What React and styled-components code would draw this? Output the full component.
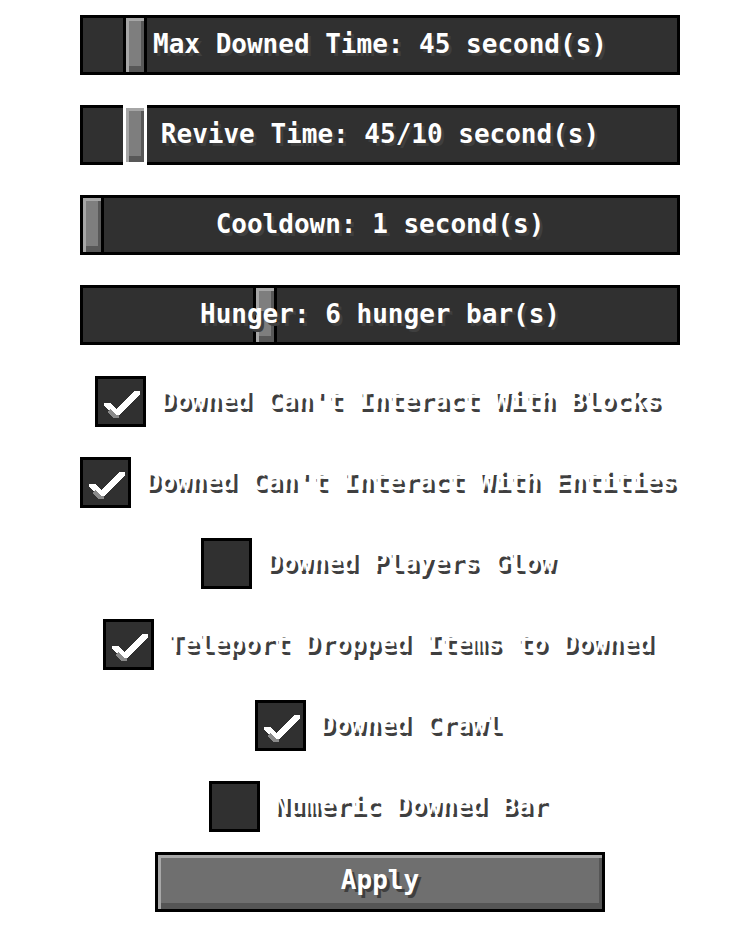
import React from "react";
import styled, { createGlobalStyle } from "styled-components";

const Global = createGlobalStyle`
  html, body { margin: 0; padding: 0; background: #ffffff; }
  body { font-family: "DejaVu Sans Mono", "Liberation Mono", monospace; }
`;

const Screen = styled.div`
  display: flex;
  flex-direction: column;
  align-items: center;
  padding-top: 15px;
  padding-left: 4px;
`;

const SliderList = styled.div`
  display: flex;
  flex-direction: column;
  gap: 30px;
`;

const SliderTrack = styled.div`
  position: relative;
  box-sizing: border-box;
  width: 600px;
  height: 60px;
  border: 3px solid #000;
  background: #303030;
  display: flex;
  align-items: center;
  justify-content: center;
`;

const Handle = styled.div`
  position: absolute;
  top: -3px;
  bottom: -3px;
  width: 24px;
  box-sizing: border-box;
  border: 3px solid ${(p) => (p.$focused ? "#ffffff" : "#000000")};
  background: #7e7e7e;
  box-shadow: inset 3px 3px 0 #a6a6a6, inset -3px -6px 0 #585858;
`;

const SliderText = styled.span`
  position: relative;
  color: #ffffff;
  font-size: 26px;
  font-weight: bold;
  line-height: 1;
  text-shadow: 3px 3px 0 #3f3f3f;
  white-space: nowrap;
  margin-top: -2px;
`;

const CheckList = styled.div`
  display: flex;
  flex-direction: column;
  align-items: center;
  gap: 30px;
  margin-top: 31px;
  margin-left: -4px;
`;

const CheckRow = styled.div`
  display: flex;
  align-items: center;
  gap: 14px;
  height: 51px;
`;

const Box = styled.div`
  box-sizing: border-box;
  width: 51px;
  height: 51px;
  border: 3px solid #000;
  background: #303030;
  display: flex;
  align-items: center;
  justify-content: center;
`;

const Label = styled.span`
  color: #ffffff;
  font-size: 25.2px;
  font-weight: bold;
  line-height: 1;
  text-shadow: 3px 3px 0 #3f3f3f;
  white-space: nowrap;
  margin-top: -2px;
`;

const ApplyButton = styled.button`
  margin-top: 20px;
  box-sizing: border-box;
  width: 450px;
  height: 60px;
  border: 3px solid #000;
  background: #6f6f6f;
  box-shadow: inset 3px 3px 0 #a8a8a8, inset -3px -6px 0 #555555;
  color: #ffffff;
  font-family: "DejaVu Sans Mono", "Liberation Mono", monospace;
  font-size: 26px;
  font-weight: bold;
  text-shadow: 3px 3px 0 #3f3f3f;
  padding: 0 0 4px 0;
  cursor: pointer;
`;

const Check = () => (
  <svg width="45" height="45" viewBox="0 0 15 15" shapeRendering="crispEdges">
    <path d="M2 8 L4 8 L6 10 L12 4 L14 4 L14 5 L7 12 L5 12 L2 9 Z" fill="#ffffff" />
    <path d="M4 10 L6 12 L7 12 L7 13 L5 13 L3 11 Z" fill="#8a8a8a" />
  </svg>
);

const sliders = [
  { text: "Max Downed Time: 45 second(s)", value: 0.075 },
  { text: "Revive Time: 45/10 second(s)", value: 0.075, focused: true },
  { text: "Cooldown: 1 second(s)", value: 0 },
  { text: "Hunger: 6 hunger bar(s)", value: 0.3 },
];

const checks = [
  { text: "Downed Can't Interact With Blocks", checked: true },
  { text: "Downed Can't Interact With Entities", checked: true },
  { text: "Downed Players Glow", checked: false },
  { text: "Teleport Dropped Items to Downed", checked: true },
  { text: "Downed Crawl", checked: true },
  { text: "Numeric Downed Bar", checked: false },
];

export default function App() {
  return (
    <Screen>
      <Global />
      <SliderList>
        {sliders.map((s) => (
          <SliderTrack key={s.text}>
            <Handle $focused={s.focused} style={{ left: -3 + s.value * 576 }} />
            <SliderText>{s.text}</SliderText>
          </SliderTrack>
        ))}
      </SliderList>
      <CheckList>
        {checks.map((c) => (
          <CheckRow key={c.text}>
            <Box>{c.checked && <Check />}</Box>
            <Label>{c.text}</Label>
          </CheckRow>
        ))}
      </CheckList>
      <ApplyButton>Apply</ApplyButton>
    </Screen>
  );
}
